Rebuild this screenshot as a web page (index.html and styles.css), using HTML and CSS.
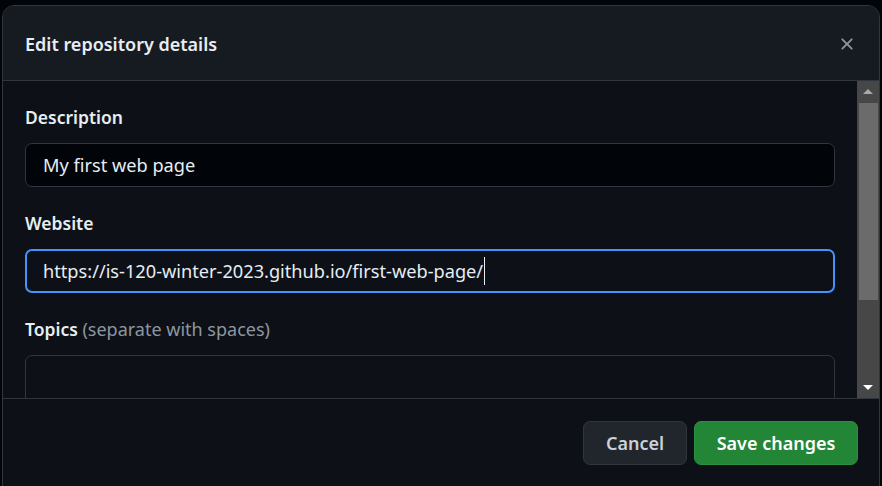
FILE: index.html
```html
<!DOCTYPE html>
<html lang="en">
<head>
<meta charset="utf-8">
<title>Edit repository details</title>
<link rel="stylesheet" href="styles.css">
</head>
<body>
<div class="dialog">
  <div class="dialog-header">
    <h1 class="dialog-title">Edit repository details</h1>
    <button class="close-btn" aria-label="Close">
      <svg width="20" height="20" viewBox="0 0 16 16" fill="currentColor"><path d="M3.72 3.72a.75.75 0 0 1 1.06 0L8 6.94l3.22-3.220a.749.749 0 0 1 1.275.326.749.749 0 0 1-.215.734L9.06 8l3.22 3.22a.749.749 0 0 1-.326 1.275.749.749 0 0 1-.734-.215L8 9.06l-3.22 3.22a.751.751 0 0 1-1.042-.018.751.751 0 0 1-.018-1.042L6.94 8 3.72 4.78a.75.75 0 0 1 0-1.06Z"/></svg>
    </button>
  </div>
  <div class="dialog-body">
    <div class="scroll-content">
      <div class="field">
        <div class="label">Description</div>
        <div class="input">My first web page</div>
      </div>
      <div class="field">
        <div class="label">Website</div>
        <div class="input input-focus">https://is-120-winter-2023.github.io/first-web-page/<span class="caret"></span></div>
      </div>
      <div class="field">
        <div class="label">Topics <span class="label-note">(separate with spaces)</span></div>
        <div class="input input-tall"></div>
      </div>
    </div>
    <div class="scrollbar">
      <div class="sb-btn"><span class="arrow-up"></span></div>
      <div class="sb-track"><div class="sb-thumb"></div></div>
      <div class="sb-btn"><span class="arrow-down"></span></div>
    </div>
  </div>
  <div class="dialog-footer">
    <button class="btn btn-cancel">Cancel</button>
    <button class="btn btn-primary">Save changes</button>
  </div>
</div>
</body>
</html>
```
FILE: styles.css
```css
* { box-sizing: border-box; }
html, body {
  margin: 0;
  padding: 0;
  background: #010409;
  height: 486px;
  overflow: hidden;
}
body {
  font-family: "Noto Sans", "Open Sans", sans-serif;
  color: #e6edf3;
  padding: 5px 2px 0 2px;
}
.dialog {
  width: 878px;
  border: 1px solid #30363d;
  border-radius: 12px;
  background: #0d1117;
  overflow: hidden;
  height: 520px;
}
.dialog-header {
  height: 75px;
  background: #161b22;
  border-bottom: 1px solid #30363d;
  display: flex;
  align-items: center;
  justify-content: space-between;
  padding: 2px 12px 0 22px;
}
.dialog-title {
  margin: 0;
  font-size: 18px;
  font-weight: 600;
  line-height: 24px;
  color: #e6edf3;
}
.close-btn {
  background: none;
  border: 0;
  padding: 0;
  width: 40px;
  height: 40px;
  display: flex;
  align-items: center;
  justify-content: center;
  color: #8d96a0;
}
.dialog-body {
  height: 318px;
  display: flex;
  border-bottom: 1px solid #30363d;
}
.scroll-content {
  flex: 1;
  padding: 24px 22px 0 22px;
  overflow: hidden;
}
.field { margin-bottom: 24px; }
.label {
  font-size: 17.5px;
  font-weight: 600;
  line-height: 24px;
  margin-bottom: 14px;
  color: #e6edf3;
}
.label-note {
  font-size: 18px;
  font-weight: 400;
  color: #8d96a0;
}
.input {
  height: 44px;
  border: 1px solid #30363d;
  border-radius: 7px;
  background: #010409;
  font-size: 18.2px;
  line-height: 42px;
  padding: 0 17px;
  color: #e6edf3;
  white-space: nowrap;
  display: flex;
  align-items: center;
}
.input-focus {
  background: #0d1117;
  border: 2px solid #4493f8;
  padding: 0 16px;
}
.caret {
  display: inline-block;
  width: 1px;
  height: 28px;
  background: #e6edf3;
  margin-left: 1px;
}
.input-tall {
  height: 120px;
  background: #0d1117;
}
.scrollbar {
  width: 22px;
  background: #474747;
  display: flex;
  flex-direction: column;
}
.sb-btn {
  height: 21px;
  display: flex;
  align-items: center;
  justify-content: center;
}
.arrow-up {
  width: 0; height: 0;
  border-left: 5px solid transparent;
  border-right: 5px solid transparent;
  border-bottom: 5px solid #a8a8a8;
}
.arrow-down {
  width: 0; height: 0;
  border-left: 5px solid transparent;
  border-right: 5px solid transparent;
  border-top: 5px solid #ffffff;
}
.sb-track {
  flex: 1;
  padding: 1px 1px 0 2px;
}
.sb-thumb {
  height: 197px;
  background: #6b6b6b;
}
.dialog-footer {
  display: flex;
  justify-content: flex-end;
  gap: 7px;
  padding: 22px 21px 0 0;
}
.btn {
  font-family: inherit;
  font-size: 18px;
  font-weight: 600;
  height: 44px;
  border-radius: 7px;
  padding: 0 16px;
  cursor: pointer;
}
.btn-cancel {
  width: 104px;
  background: #21262d;
  border: 1px solid #30363d;
  color: #c9d1d9;
}
.btn-primary {
  width: 164px;
  background: #238636;
  border: 1px solid #2a913e;
  color: #ffffff;
}
```
